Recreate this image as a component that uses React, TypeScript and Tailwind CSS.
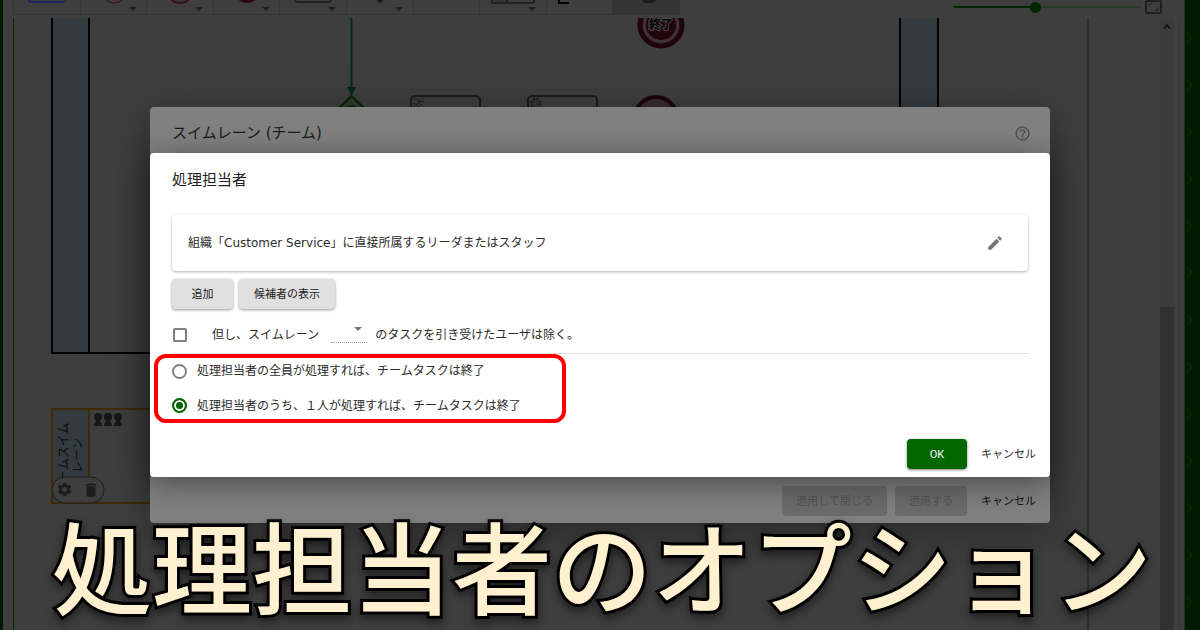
import { ReactNode } from "react";
import { MdDelete, MdEdit, MdHelpOutline, MdSettings } from "react-icons/md";

const TOOLS: { name: string; icon: ReactNode; menu: boolean }[] = [
  {
    name: "スイムレーン",
    icon: <rect x="15" y="-20" width="37" height="22" rx="3" fill="#383d45" stroke="#182a52" strokeWidth="2" />,
    menu: false,
  },
  {
    name: "開始",
    icon: <circle cx="33" cy="-10" r="13" fill="#453c40" stroke="#34141c" strokeWidth="1" />,
    menu: true,
  },
  {
    name: "中間",
    icon: <circle cx="33" cy="-10" r="13" fill="#40353a" stroke="#34141c" strokeWidth="2" />,
    menu: true,
  },
  {
    name: "終了",
    icon: <circle cx="33" cy="-10" r="13" fill="#24060c" />,
    menu: true,
  },
  {
    name: "タスク",
    icon: <rect x="15" y="-20" width="36" height="22" rx="3" fill="none" stroke="#222" strokeWidth="2" />,
    menu: true,
  },
  {
    name: "分岐",
    icon: <path d="M25 -6 L33 2 L41 -6" fill="none" stroke="#0b250b" strokeWidth="2" />,
    menu: true,
  },
  { name: "フロー", icon: null, menu: false },
  {
    name: "データ",
    icon: (
      <>
        <rect x="12" y="-20" width="42" height="23" rx="2" fill="none" stroke="#222" strokeWidth="2" />
        <rect x="12" y="-20" width="15" height="23" fill="#2b3942" stroke="#222" strokeWidth="2" />
      </>
    ),
    menu: true,
  },
  {
    name: "注釈",
    icon: <path d="M12 -10 V3 H22" fill="none" stroke="#000" strokeWidth="2" />,
    menu: false,
  },
  {
    name: "ロック",
    icon: <rect x="29" y="-10" width="14" height="13" rx="4" fill="#1c1c1c" />,
    menu: false,
  },
];

const BUTTON = "h-[30px] rounded pt-[2px] text-[11px]";
const RAISED = "bg-[#e0e0e0] text-[#212121] shadow-[0_1px_3px_rgba(0,0,0,0.4)]";

export default function App() {
  return (
    <div className="relative flex h-screen overflow-hidden bg-[#3e3e3e] font-['DejaVu_Sans','Noto_Sans_CJK_JP',sans-serif]">
      <div className="w-[3px] shrink-0 bg-[#001a00]" />
      <Editor />
      <GreenEdge />

      <div className="absolute inset-x-0 top-0 flex justify-center pt-[107px]">
        <LaneDialog />
      </div>

      <h1 className="absolute inset-x-0 bottom-0 pl-1 text-center text-[100px] leading-[114px] font-medium whitespace-nowrap text-[#fff1cf] [-webkit-text-stroke:6px_#000] [paint-order:stroke_fill] [filter:drop-shadow(0_4px_5px_rgba(0,0,0,0.5))]">
        処理担当者のオプション
      </h1>
    </div>
  );
}

function Editor() {
  return (
    <div className="flex min-w-0 flex-1 flex-col border-r border-[#2a2a2a] pl-[10px]">
      <div className="flex h-[18px] shrink-0 items-start justify-between">
        <div className="grid h-[15px] w-[667px] grid-cols-10 rounded-b border-b border-l border-[#353535]">
          {TOOLS.map((tool, i) => (
            <button
              key={tool.name}
              aria-label={tool.name}
              className={`overflow-hidden border-r border-[#353535] ${i === 9 ? "rounded-br bg-[#353535]" : ""}`}
            >
              <svg className="block h-[14px] w-full" viewBox="0 0 66 14" preserveAspectRatio="xMinYMin slice">
                {tool.icon}
                {tool.menu && <path d="M48 7 h8 l-4 4 z" fill="#1f1f1f" />}
              </svg>
            </button>
          ))}
        </div>
        <div className="flex items-center gap-1 pr-[22px]">
          <input
            type="range"
            aria-label="ズーム"
            defaultValue={43}
            className="h-[12px] w-[187px] appearance-none bg-[linear-gradient(to_right,#002600_43%,#293829_43%)] bg-[length:100%_2px] bg-center bg-no-repeat [&::-webkit-slider-thumb]:size-[11px] [&::-webkit-slider-thumb]:appearance-none [&::-webkit-slider-thumb]:rounded-full [&::-webkit-slider-thumb]:bg-[#002600]"
          />
          <button aria-label="全画面">
            <svg width="17" height="14" viewBox="0 0 17 14" fill="none" stroke="#202020">
              <rect x="1" y="1" width="15" height="12" rx="1" strokeWidth="2" />
              <path d="M4 7 V4 H7 M13 7 V10 H10" />
            </svg>
          </button>
        </div>
      </div>
      <div className="flex min-h-0 flex-1">
        <div className="min-w-0 flex-1 overflow-hidden">
          <Diagram />
        </div>
        <div className="flex w-[14px] flex-col items-center bg-[#3b3b3b]">
          <svg width="8" height="18" viewBox="0 0 8 18" fill="none" stroke="#161616" strokeWidth="2">
            <path d="M1 11 L4 7 L7 11" />
          </svg>
          <div className="mt-[271px] w-full flex-1 bg-[#313131]" />
        </div>
        <div className="mr-1 w-[6px] border-r border-[#353535]" />
      </div>
    </div>
  );
}

function GreenEdge() {
  return (
    <div className="w-[15px] shrink-0 bg-[#001a00]">
      <svg width="15" height="630" fill="none" stroke="#0b2400" strokeWidth="2">
        {Array.from({ length: 14 }, (_, i) => (
          <path key={i} d={`M2 ${33 + i * 47} l5 5 l-5 5`} />
        ))}
      </svg>
    </div>
  );
}

function Diagram() {
  return (
    <svg width="1148" height="612" viewBox="13 18 1148 612">
      <path d="M13.5 18 V630" stroke="#132813" />
      <path d="M1088 18 V630" stroke="#213421" strokeWidth="2" />

      {/* upper lane */}
      <rect x="52" y="0" width="37" height="353" fill="#333b3f" />
      <rect x="900" y="0" width="38" height="353" fill="#333b3f" />
      <path d="M52 0 V353 H900 M89 0 V353 M900 0 V353 M938 0 V353" fill="none" stroke="#000" strokeWidth="2" />

      {/* flow arrow and gateway */}
      <path d="M351.5 18 V88" stroke="#00281c" strokeWidth="2" />
      <path d="M347 87 H356 L351.5 96 Z" fill="#00281c" />
      <path d="M339 108 L351.5 96 L364 108" fill="#2f3b2b" stroke="#0b1f0b" strokeWidth="2" />
      <circle cx="351.5" cy="112" r="6" fill="none" stroke="#0b1f0b" strokeWidth="2" />

      {/* tasks */}
      <rect x="411" y="96" width="69" height="45" rx="4" fill="none" stroke="#1c1c1c" strokeWidth="2" />
      <path
        d="M413 99 h4 l2 2 l3 -3 h2 M413 103 l3 1 l8 8 M424 101 l-5 1 l-6 6 M417 101 l5 5"
        fill="none"
        stroke="#222"
      />
      <rect x="528" y="96" width="69" height="45" rx="4" fill="none" stroke="#1c1c1c" strokeWidth="2" />
      <circle cx="535.5" cy="103.5" r="5" fill="none" stroke="#222" strokeWidth="2" strokeDasharray="2 2" />
      <circle cx="535.5" cy="103.5" r="4" fill="#3e3e3e" stroke="#222" />
      <circle cx="535.5" cy="103.5" r="2" fill="none" stroke="#222" />

      {/* end events */}
      <circle cx="661" cy="25" r="21" fill="#3b3038" stroke="#1f0409" strokeWidth="5" />
      <circle cx="661" cy="25" r="15" fill="#1f0409" />
      <text
        x="661"
        y="29"
        textAnchor="middle"
        fontSize="12"
        fontWeight="bold"
        fill="#000"
        stroke="#4a4a4a"
        strokeWidth="2"
        paintOrder="stroke"
      >
        終了
      </text>
      <circle cx="656" cy="118" r="21" fill="#352d32" stroke="#1f0409" strokeWidth="4" />

      {/* team lane */}
      <rect x="52" y="409" width="37" height="94" fill="#333b3f" />
      <path d="M200 409 H52 V503 H200 M89 409 V503" fill="none" stroke="#402a05" strokeWidth="2" />
      <g fill="#0c0c0c" fontSize="12">
        <text transform="translate(68 482) rotate(-90)">ームスイム</text>
        <text transform="translate(82 473) rotate(-90)">レーン</text>
      </g>
      {[98, 108, 118].map((x) => (
        <g key={x} fill="#161616">
          <circle cx={x} cy="417" r="4" />
          <path d={`M${x - 4} 426 Q${x - 4} 422 ${x} 420 Q${x + 4} 422 ${x + 4} 426 Z`} />
        </g>
      ))}
      <rect x="52" y="477" width="52" height="26" rx="13" fill="#3e3e3e" stroke="#1c1c1c" />
      <MdSettings x="56" y="481" size={17} color="#1c1c1c" />
      <MdDelete x="82" y="481" size={18} color="#1c1c1c" />
    </svg>
  );
}

function LaneDialog() {
  return (
    <div className="w-3/4 rounded bg-[#808080] shadow-[0_8px_40px_rgba(0,0,0,0.35)]">
      <div className="flex h-[46px] items-center justify-between px-[19px] pt-[7px]">
        <h2 className="pl-[3px] text-[15px] text-[#1a1a1a]">スイムレーン (チーム)</h2>
        <button aria-label="ヘルプ">
          <MdHelpOutline size={17} color="#4d4d4d" />
        </button>
      </div>
      <AssigneeDialog />
      <div className="flex h-[46px] items-center justify-end pt-[2px]">
        <button disabled className={`${BUTTON} mr-2 bg-[#6b6b6b] px-[14px] text-[#535353]`}>
          適用して閉じる
        </button>
        <button disabled className={`${BUTTON} bg-[#6b6b6b] px-[14px] text-[#535353]`}>
          適用する
        </button>
        <button className={`${BUTTON} px-[14px] text-[#111]`}>キャンセル</button>
      </div>
    </div>
  );
}

function AssigneeDialog() {
  return (
    <div className="relative rounded bg-white text-[12px] text-[#2b2b2b] shadow-[0_6px_30px_rgba(0,0,0,0.45)]">
      <div className="px-[22px] pt-4">
        <h3 className="text-[15px] leading-[22px] text-[#212121]">処理担当者</h3>

        <div className="mt-6 flex h-[56px] items-center justify-between rounded pr-6 pl-4 shadow-[0_1px_3px_rgba(0,0,0,0.3)]">
          <span>組織「Customer Service」に直接所属するリーダまたはスタッフ</span>
          <button aria-label="編集">
            <MdEdit size={18} color="#757575" />
          </button>
        </div>

        <div className="mt-2 flex gap-[6px]">
          <button className={`${BUTTON} ${RAISED} w-[61px]`}>追加</button>
          <button className={`${BUTTON} ${RAISED} w-[96px]`}>候補者の表示</button>
        </div>

        <div className="flex h-[45px] items-center border-b border-[#e0e0e0] pt-[7px]">
          <input
            id="exclude"
            type="checkbox"
            className="ml-px size-[14px] appearance-none rounded-[2px] border-2 border-[#808080] checked:bg-[#808080]"
          />
          <label htmlFor="exclude" className="ml-[25px]">
            但し、スイムレーン
          </label>
          <div className="relative mr-2 ml-3 h-4 w-9">
            <select
              aria-label="スイムレーン"
              className="h-full w-full appearance-none border-b border-dotted border-[#999]"
            >
              <option></option>
            </select>
            <svg className="pointer-events-none absolute top-0 right-[5px]" width="8" height="5" viewBox="0 0 8 5">
              <path d="M0 0 H8 L4 4 Z" fill="#757575" />
            </svg>
          </div>
          <label htmlFor="exclude">のタスクを引き受けたユーザは除く。</label>
        </div>

        <fieldset className="relative flex h-[69px] flex-col justify-around">
          <Choice id="all" label="処理担当者の全員が処理すれば、チームタスクは終了" />
          <Choice id="one" label="処理担当者のうち、１人が処理すれば、チームタスクは終了" checked />
          <div className="pointer-events-none absolute top-0 -left-[18px] h-full w-[412px] rounded-xl border-4 border-[#ff0000]" />
        </fieldset>
      </div>

      <div className="flex items-center justify-end pt-4 pb-2">
        <button className={`${BUTTON} w-[60px] bg-[#006600] font-[Roboto,sans-serif] text-white shadow-[0_1px_3px_rgba(0,0,0,0.5)]`}>
          OK
        </button>
        <button className={`${BUTTON} px-[14px]`}>キャンセル</button>
      </div>
    </div>
  );
}

function Choice({ id, label, checked }: { id: string; label: string; checked?: boolean }) {
  return (
    <div className="flex items-center">
      <input
        id={id}
        type="radio"
        name="finish"
        defaultChecked={checked}
        className="size-[15px] appearance-none rounded-full border-2 border-[#808080] checked:border-[#006600] checked:bg-[#006600] checked:shadow-[inset_0_0_0_2px_#fff]"
      />
      <label htmlFor={id} className="ml-[10px]">
        {label}
      </label>
    </div>
  );
}
